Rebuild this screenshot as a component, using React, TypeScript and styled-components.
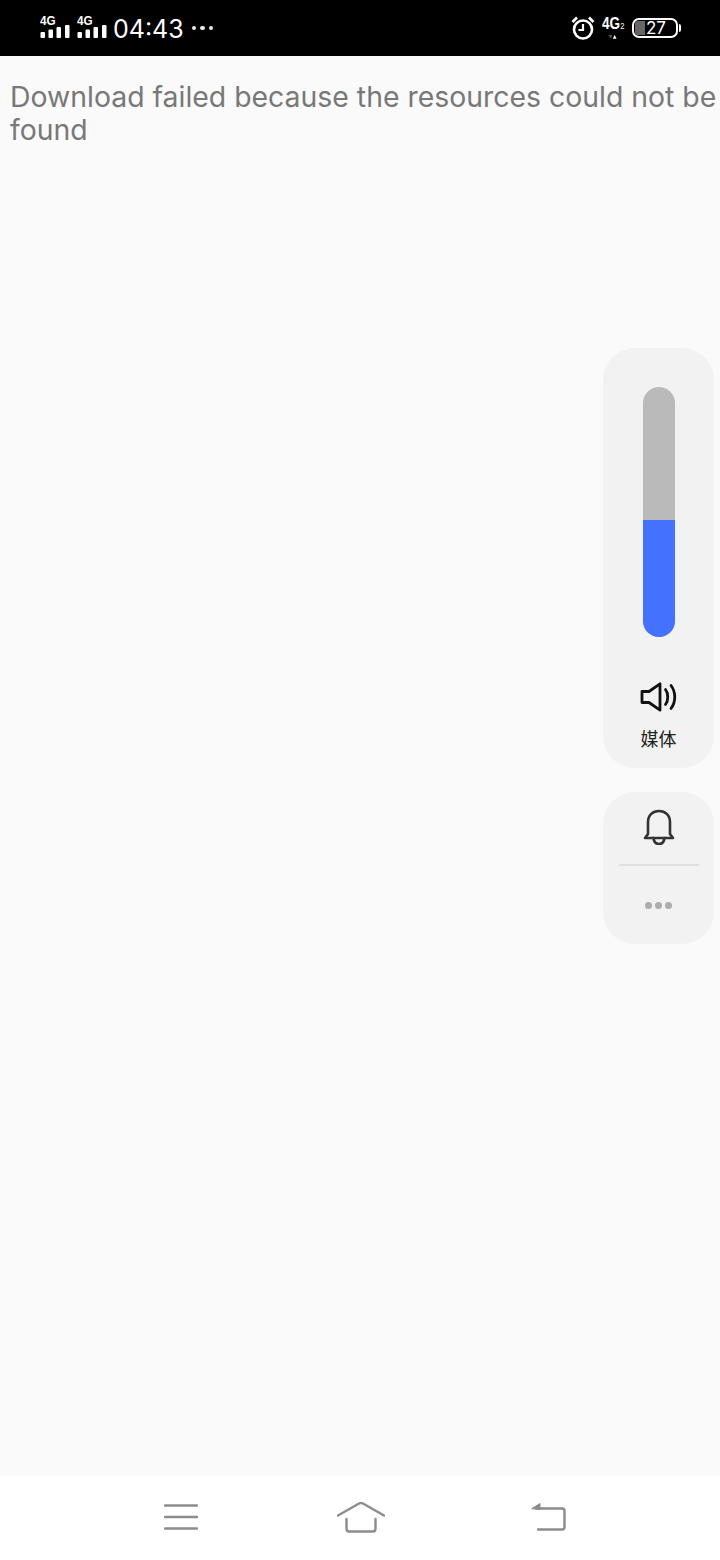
import { createGlobalStyle, styled } from "styled-components";

const GlobalStyle = createGlobalStyle`
  html, body {
    margin: 0;
    padding: 0;
    background: #fafafa;
  }
`;

const Page = styled.div`
  width: 720px;
  height: 1560px;
  display: flex;
  flex-direction: column;
  position: relative;
  overflow: hidden;
  font-family: Inter, "Noto Sans CJK SC", sans-serif;
`;

const StatusBar = styled.header`
  height: 56px;
  flex: none;
  box-sizing: border-box;
  background: #000;
  color: #fff;
  display: flex;
  align-items: center;
  justify-content: space-between;
  padding: 0 40px;
`;

const StatusGroup = styled.div`
  display: flex;
  align-items: center;
`;

const Signal = styled.div`
  width: 30px;
  margin-right: 7px;
  display: flex;
  flex-direction: column;
  align-items: flex-start;
  height: 24px;
  margin-top: -2px;
`;

const SignalLabel = styled.span`
  font-family: "Liberation Sans", sans-serif;
  font-size: 13px;
  line-height: 11px;
  font-weight: 700;
  height: 10px;
  transform: scaleX(0.9);
  transform-origin: left;
`;

const Clock = styled.span`
  font-size: 25px;
  line-height: 30px;
  font-weight: 400;
  margin-left: -1px;
  margin-top: 2px;
`;

const Dots = styled.span`
  display: flex;
  gap: 4px;
  margin-left: 8px;
`;

const Dot = styled.i`
  width: 4.5px;
  height: 4.5px;
  border-radius: 50%;
  background: #e8e8e8;
`;

const NetBadge = styled.div`
  width: 23px;
  margin: 0 7px;
  display: flex;
  flex-direction: column;
  align-items: flex-start;
  height: 22px;
`;

const NetLabel = styled.span`
  font-family: "Liberation Sans", sans-serif;
  font-size: 16px;
  line-height: 14px;
  font-weight: 700;
  transform: scaleX(0.85);
  transform-origin: left;
  white-space: nowrap;

  small {
    font-size: 9px;
    font-weight: 400;
  }
`;

const TransferArrows = styled.svg`
  display: block;
  margin-top: 2px;
`;

const Battery = styled.div`
  width: 46px;
  height: 20px;
  margin-right: 2px;
  box-sizing: border-box;
  border: 2px solid #fff;
  border-radius: 7px;
  position: relative;
  display: flex;
  align-items: center;
  justify-content: center;
  padding-left: 2px;
  font-size: 17px;
  line-height: 16px;

  &::after {
    content: "";
    position: absolute;
    right: -5px;
    top: 4px;
    width: 2px;
    height: 8px;
    border-radius: 0 2px 2px 0;
    background: #fff;
  }
`;

const BatteryFill = styled.div`
  position: absolute;
  left: 1px;
  top: 1px;
  bottom: 1px;
  width: 10px;
  border-radius: 3px 0 0 3px;
  background: #666;
`;

const BatteryText = styled.span`
  position: relative;
`;

const Content = styled.main`
  flex: 1;
  background: #fafafa;
  padding: 24px 0 0 10px;
`;

const Message = styled.p`
  margin: 0;
  font-size: 28.4px;
  line-height: 33px;
  font-weight: 400;
  color: #787878;
`;

const VolumeDock = styled.aside`
  position: absolute;
  top: 348px;
  right: 6px;
  width: 111px;
  display: flex;
  flex-direction: column;
  gap: 24px;
`;

const Panel = styled.div`
  background: #f2f2f2;
  border-radius: 32px;
  display: flex;
  flex-direction: column;
  align-items: center;
`;

const MediaPanel = styled(Panel)`
  height: 420px;
  padding-top: 39px;
  box-sizing: border-box;
`;

const Track = styled.div`
  width: 32px;
  height: 250px;
  flex: none;
  border-radius: 16px;
  background: #bababa;
  overflow: hidden;
  display: flex;
  align-items: flex-end;
`;

const TrackFill = styled.div`
  width: 100%;
  background: #4472ff;
`;

const SpeakerIcon = styled.svg`
  margin-top: 45px;
  display: block;
  flex: none;
`;

const MediaLabel = styled.span`
  margin-top: 16px;
  font-size: 18px;
  line-height: 20px;
  color: #222;
  font-family: "Noto Sans CJK SC", sans-serif;
`;

const RingPanel = styled(Panel)`
  height: 152px;
  padding-top: 17px;
  box-sizing: border-box;
`;

const Divider = styled.div`
  width: 80px;
  height: 2px;
  margin-top: 19px;
  background: #e0e0e0;
`;

const MoreDots = styled.div`
  display: flex;
  gap: 3px;
  margin-top: 36px;
`;

const MoreDot = styled.i`
  width: 7px;
  height: 7px;
  border-radius: 50%;
  background: #adadad;
`;

const NavBar = styled.nav`
  height: 84px;
  flex: none;
  box-sizing: border-box;
  background: #fff;
  display: flex;
  align-items: flex-start;
  padding: 26px 0 0 164px;
`;

const NavIcon = styled.svg<{ $gap?: number }>`
  display: block;
  flex: none;
  margin-left: ${(p) => p.$gap ?? 0}px;
`;

const SignalBars = () => (
  <svg width="30" height="13" viewBox="0 0 30 13" fill="#fff">
    <rect x="0.5" y="7" width="4.5" height="6" rx="1" />
    <rect x="8.5" y="4.5" width="4.5" height="8.5" rx="1" />
    <rect x="16.5" y="2" width="4.5" height="11" rx="1" />
    <rect x="25" y="0" width="4.5" height="13" rx="1" />
  </svg>
);

export default function App() {
  return (
    <Page>
      <GlobalStyle />
      <StatusBar>
        <StatusGroup>
          <Signal>
            <SignalLabel>4G</SignalLabel>
            <SignalBars />
          </Signal>
          <Signal>
            <SignalLabel>4G</SignalLabel>
            <SignalBars />
          </Signal>
          <Clock>04:43</Clock>
          <Dots>
            <Dot />
            <Dot />
            <Dot />
          </Dots>
        </StatusGroup>
        <StatusGroup>
          <svg width="24" height="24" viewBox="0 0 24 24" fill="none" stroke="#fff">
            <circle cx="12" cy="13.5" r="9" strokeWidth="2.6" />
            <path d="M12 8V14H7.5" strokeWidth="2.2" />
            <path d="M1.5 6 6 1.5M22.5 6 18 1.5" strokeWidth="2.6" />
          </svg>
          <NetBadge>
            <NetLabel>
              4G<small>2</small>
            </NetLabel>
            <TransferArrows width="20" height="6" viewBox="0 0 20 6">
              <path d="M5 0h5.5L7.75 5.5z" fill="#555" />
              <path d="M14 0l2.9 5.5h-5.800z" fill="#fff" />
            </TransferArrows>
          </NetBadge>
          <Battery>
            <BatteryFill />
            <BatteryText>27</BatteryText>
          </Battery>
        </StatusGroup>
      </StatusBar>

      <Content>
        <Message>Download failed because the resources could not be found</Message>
      </Content>

      <VolumeDock>
        <MediaPanel>
          <Track>
            <TrackFill style={{ height: `${(117 / 250) * 100}%` }} />
          </Track>
          <SpeakerIcon width="38" height="30" viewBox="0 0 38 30" fill="none" stroke="#111" strokeWidth="2.8" strokeLinejoin="round" strokeLinecap="round">
            <path d="M2 9.5H9L20 1.8V28.2L9 20.5H2Z" />
            <path d="M25.5 7.5C28.5 11.5 28.5 18.5 25.5 22.5" />
            <path d="M31 3.5C36 10 36 20 31 26.5" />
          </SpeakerIcon>
          <MediaLabel>媒体</MediaLabel>
        </MediaPanel>
        <RingPanel>
          <svg width="32" height="36" viewBox="0 0 32 36" fill="none" stroke="#333" strokeWidth="2.6" strokeLinecap="round" strokeLinejoin="round">
            <path d="M5 25V13C5 6 10 2 16 2S27 6 27 13V25L30 29H2Z" />
            <path d="M10.5 29C11 33 13.5 35 16 35S21 33 21.5 29" />
          </svg>
          <Divider />
          <MoreDots>
            <MoreDot />
            <MoreDot />
            <MoreDot />
          </MoreDots>
        </RingPanel>
      </VolumeDock>

      <NavBar>
        <NavIcon width="34" height="30" viewBox="0 0 34 30" fill="none" stroke="#8c8c8c" strokeWidth="2.4" strokeLinecap="round">
          <path d="M1 3.5H33M1 15H33M1 26.5H33" />
        </NavIcon>
        <NavIcon $gap={139} width="48" height="32" viewBox="0 0 48 32" fill="none" stroke="#8c8c8c" strokeWidth="2.4" strokeLinecap="round" strokeLinejoin="round">
          <path d="M1 13.5 22 1.5C23.3 0.9 24.7 0.9 26 1.5L47 13.5" />
          <path d="M9.5 17V26.5C9.5 28.5 10.5 29.5 12 29.5H36C37.5 29.5 38.5 28.5 38.5 26.5V17" />
        </NavIcon>
        <NavIcon $gap={146} width="36" height="30" viewBox="0 0 36 30" fill="none" stroke="#8c8c8c" strokeWidth="2.4" strokeLinecap="round" strokeLinejoin="round">
          <path d="M5 6.5H31C32.5 6.5 33.5 7.5 33.5 9V25C33.5 26.5 32.5 27.5 31 27.5H7" />
          <path d="M1 6.5 9 1.5V7Z" fill="#8c8c8c" strokeWidth="1" />
        </NavIcon>
      </NavBar>
    </Page>
  );
}
